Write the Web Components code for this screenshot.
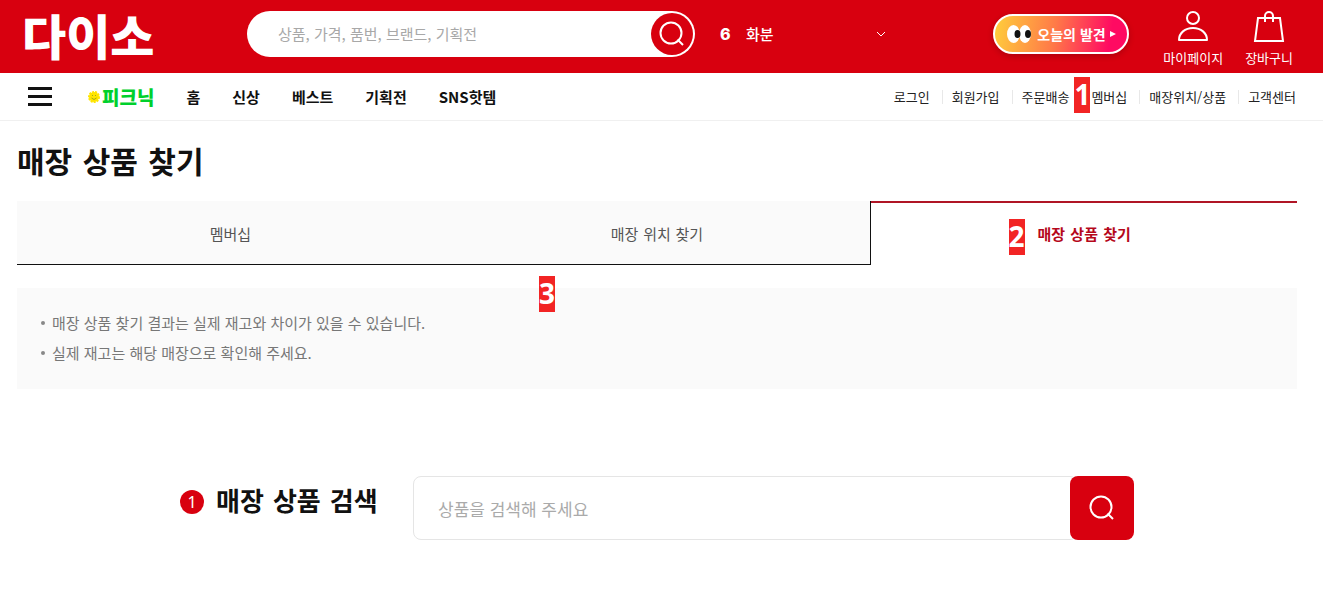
<!DOCTYPE html>
<html lang="ko">
<head>
<meta charset="utf-8">
<meta name="viewport" content="width=device-width, initial-scale=1">
<title>매장 상품 찾기</title>
<style>
  body { margin: 0; background: #fff; color: #111; font-family: "Noto Sans CJK KR", sans-serif; }
</style>
</head>
<body>
<store-page></store-page>
<script>
const define = (name, html) => {
  const template = document.createElement('template');
  template.innerHTML = `<style>
    *, *::before, *::after { box-sizing: border-box; }
    a { color: inherit; text-decoration: none; }
    button { font: inherit; color: inherit; border: 0; padding: 0; margin: 0; background: none; cursor: pointer; }
    ul { list-style: none; margin: 0; padding: 0; }
    svg { display: block; }
  </style>` + html;
  customElements.define(name, class extends HTMLElement {
    constructor() {
      super();
      this.attachShadow({ mode: 'open' }).append(template.content.cloneNode(true));
    }
  });
};

/* Numbered marker laid over other content */
define('step-marker', `
  <style>
    :host { position: absolute; width: 16px; height: 36px; background: #f22424; color: #fff;
      font: 700 28px/34px "Open Sans", "Noto Sans", sans-serif; text-align: center; }
  </style><slot></slot>`);

define('search-icon', `
  <style>:host { display: block; width: 26px; height: 26px; }</style>
  <svg width="26" height="26" viewBox="0 0 26 26" fill="none" stroke="#fff" stroke-width="2">
    <circle cx="12" cy="12" r="10.5"/><path d="M18.5 18.5L24 24"/>
  </svg>`);

define('header-search', `
  <style>
    :host { display: block; }
    form { display: flex; align-items: center; height: 46px; padding: 0 2px 0 31px; border-radius: 23px; background: #fff; }
    input { flex: 1; min-width: 0; border: 0; outline: 0; padding: 0; background: none; font: 400 15px/22px "Noto Sans CJK KR", sans-serif; color: #111; }
    input::placeholder { color: #a8a8a8; opacity: 1; }
    button { display: grid; place-items: center; width: 42px; height: 42px; border-radius: 50%; background: #d8000f; }
  </style>
  <form><input type="text" aria-label="검색어" placeholder="상품, 가격, 품번, 브랜드, 기획전"><button type="button" aria-label="검색"><search-icon></search-icon></button></form>`);

define('trend-keyword', `
  <style>
    :host { display: block; }
    button { display: flex; align-items: center; width: 100%; font-size: 15px; line-height: 22px; font-weight: 500; color: #fff; }
    b { width: 26px; text-align: left; font: 800 16px/22px Inter, sans-serif; }
    svg { margin-left: auto; }
  </style>
  <button type="button"><b>6</b><span>화분</span>
    <svg width="10" height="6" viewBox="0 0 10 6" fill="none" stroke="#fff"><path d="M1 1l4 4 4-4"/></svg>
  </button>`);

define('discovery-link', `
  <style>
    :host { display: block; }
    a { display: flex; align-items: center; width: 136px; height: 40px; padding-left: 12px; border: 2px solid #fff; border-radius: 20px;
      background: linear-gradient(100deg, #ffc83c 5%, #ff7a48 45%, #ff0a62 85%) border-box; box-shadow: 0 2px 6px #0003;
      font-size: 14px; line-height: 20px; font-weight: 700; color: #fff; white-space: nowrap; }
    .eyes { margin-right: 6px; }
    .arrow { margin-left: 4px; }
  </style>
  <a href="#"><svg class="eyes" width="24" height="20" viewBox="0 0 24 20">
      <ellipse cx="6.5" cy="10" rx="6.5" ry="9" fill="#fff"/><ellipse cx="18" cy="10" rx="6" ry="9" fill="#fff"/>
      <ellipse cx="10.5" cy="10" rx="3" ry="4" fill="#111"/><ellipse cx="21" cy="10" rx="3" ry="4" fill="#111"/>
    </svg><span>오늘의 발견</span><svg class="arrow" width="7" height="8" viewBox="0 0 7 8"><path d="M0 1l6 3-6 3z" fill="#fff"/></svg></a>`);

define('header-action', `
  <style>
    :host { display: block; }
    a { display: grid; justify-items: center; gap: 5px; color: #fff; font-size: 13px; line-height: 20px; white-space: nowrap; }
  </style>
  <a href="#"><slot name="icon"></slot><slot></slot></a>`);

define('site-header', `
  <style>
    :host { display: block; background: #d8000f; }
    header { display: flex; align-items: flex-start; height: 73px; padding: 11px 30px 0 22px; }
    .logo { font-size: 48px; line-height: 46px; font-weight: 900; color: #fff; width: 225px; flex: none; }
    header-search { flex: 0 1 448px; }
    trend-keyword { flex: 0 1 166px; margin: 12px 0 0 25px; }
    discovery-link { margin: 3px 0 0 auto; }
    .actions { display: flex; gap: 22px; margin-left: 34px; }
  </style>
  <header>
    <a class="logo" href="#">다이소</a>
    <header-search></header-search>
    <trend-keyword></trend-keyword>
    <discovery-link></discovery-link>
    <div class="actions">
      <header-action>
        <svg slot="icon" width="32" height="32" viewBox="0 0 32 32" fill="none" stroke="#fff" stroke-width="2"><circle cx="16" cy="7" r="6"/><path d="M2 29c0-7 6-12 14-12s14 5 14 12z" stroke-linejoin="round"/></svg>마이페이지</header-action>
      <header-action>
        <svg slot="icon" width="32" height="32" viewBox="0 0 32 32" fill="none" stroke="#fff" stroke-width="2"><path d="M5 7h22l3 23H2z"/><path d="M12 11V5a4 4 0 0 1 8 0v6"/></svg>장바구니</header-action>
    </div>
  </header>`);

define('main-nav', `
  <style>
    :host { display: block; border-bottom: 1px solid #f0f0f0; }
    nav { display: flex; align-items: center; height: 47px; padding: 0 27px 0 28px; }
    .menu { display: grid; gap: 5px; width: 24px; margin-right: 36px; }
    .menu i { height: 3px; background: #111; }
    ul { display: flex; align-items: center; }
    .main { gap: 32px; font-size: 15px; line-height: 22px; font-weight: 700; }
    .main a { display: flex; align-items: center; white-space: nowrap; }
    .picnic { gap: 2px; font-size: 19px; font-weight: 900; color: #00d02c; }
    .util { margin-left: auto; font-size: 13px; line-height: 20px; color: #222; }
    .util li { position: relative; display: flex; align-items: center; white-space: nowrap; }
    .util li + li::before { content: ""; width: 1px; height: 14px; margin: 0 9px 0 12px; background: #e8e8e8; }
    step-marker { left: 5px; top: -10px; }
  </style>
  <nav>
    <button class="menu" type="button" aria-label="메뉴"><i></i><i></i><i></i></button>
    <ul class="main">
      <li><a class="picnic" href="#"><svg width="12" height="12" viewBox="0 0 12 12"><circle cx="6" cy="6" r="5" fill="#ffe500" stroke="#ffe500" stroke-width="2" stroke-dasharray="2 1"/><path d="M3.5 7q2.5 3 5 0M4.5 4v1M7.5 4v1" fill="none" stroke="#8a9a20" stroke-width=".8"/></svg>피크닉</a></li>
      <li><a href="#">홈</a></li><li><a href="#">신상</a></li><li><a href="#">베스트</a></li><li><a href="#">기획전</a></li><li><a href="#">SNS핫템</a></li>
    </ul>
    <ul class="util">
      <li><a href="#">로그인</a></li><li><a href="#">회원가입</a></li><li><a href="#">주문배송</a></li>
      <li><a href="#">멤버십</a><step-marker>1</step-marker></li><li><a href="#">매장위치/상품</a></li><li><a href="#">고객센터</a></li>
    </ul>
  </nav>`);

define('store-tabs', `
  <style>
    :host { display: block; }
    nav { display: grid; grid-template-columns: repeat(3, 1fr); height: 64px; font: 400 15px/22px "DejaVu Sans", "Noto Sans CJK KR", sans-serif; }
    a { display: grid; place-items: center; padding-top: 4px; background: #fafafa; color: #555; border-bottom: 1px solid #111; }
    a[aria-current] { background: #fff; color: #b5081b; font-weight: 700; border: solid #111; border-width: 0 0 0 1px; position: relative; }
    a[aria-current]::before { content: ""; position: absolute; inset: 0 0 auto; height: 2px; background: #b01525; }
    span { position: relative; }
    step-marker { right: 100%; top: -5px; margin-right: 13px; }
  </style>
  <nav>
    <a href="#"><span>멤버십</span></a><a href="#"><span>매장 위치 찾기</span></a>
    <a href="#" aria-current="page"><span>매장 상품 찾기<step-marker>2</step-marker></span></a>
  </nav>`);

define('notice-box', `
  <style>
    :host { display: block; position: relative; padding: 20px 24px 21px; background: #fafafa; color: #777; font-size: 15px; line-height: 30px; }
    li { display: flex; align-items: center; gap: 7px; }
    li::before { content: ""; width: 4px; height: 4px; border-radius: 50%; background: #888; }
    step-marker { left: 522px; top: -12px; }
  </style>
  <ul><li>매장 상품 찾기 결과는 실제 재고와 차이가 있을 수 있습니다.</li><li>실제 재고는 해당 매장으로 확인해 주세요.</li></ul>
  <step-marker>3</step-marker>`);

define('product-search', `
  <style>
    :host { display: block; }
    form { display: flex; max-width: 954px; margin: 0 auto; }
    label { display: flex; align-items: center; gap: 12px; height: 52px; width: 233px; flex: none;
      font: 700 26px/38px "DejaVu Sans", "Noto Sans CJK KR", sans-serif; white-space: nowrap; }
    label i { width: 24px; height: 24px; border-radius: 50%; background: #d8000f; color: #fff; font: 400 16px/24px "Noto Sans", sans-serif; text-align: center; }
    .field { flex: 1; display: flex; height: 64px; }
    input { flex: 1; min-width: 0; margin-right: -8px; padding: 2px 24px 0; border: 1px solid #e5e5e5; border-radius: 8px; outline: 0; background: #fff;
      font: 400 17px/26px "Noto Sans CJK KR", sans-serif; color: #111; }
    input::placeholder { color: #aaa; opacity: 1; }
    button { position: relative; display: grid; place-items: center; width: 64px; border-radius: 8px; background: #d8000f; }
  </style>
  <form>
    <label for="product"><i>1</i>매장 상품 검색</label>
    <div class="field"><input id="product" type="text" placeholder="상품을 검색해 주세요"><button type="button" aria-label="상품 검색"><search-icon></search-icon></button></div>
  </form>`);

define('store-page', `
  <style>
    :host { display: block; }
    main { padding: 20px 26px 50px 17px; }
    h1 { margin: 0 0 16px; font: 700 30px/44px "DejaVu Sans", "Noto Sans CJK KR", sans-serif; }
    notice-box { margin: 23px 0 87px; }
  </style>
  <site-header></site-header>
  <main-nav></main-nav>
  <main>
    <h1>매장 상품 찾기</h1>
    <store-tabs></store-tabs>
    <notice-box></notice-box>
    <product-search></product-search>
  </main>`);
</script>
</body>
</html>
